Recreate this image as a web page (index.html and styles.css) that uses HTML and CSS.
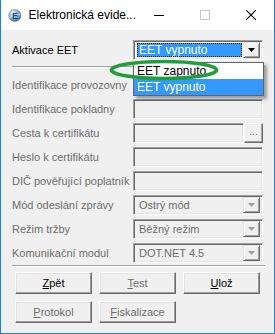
FILE: index.html
```html
<!DOCTYPE html>
<html lang="cs">
<head>
    <meta charset="UTF-8">
    <title>Elektronická evidence tržeb</title>
    <link rel="stylesheet" href="styles.css">
</head>
<body>
    <div class="window">
        <div class="titlebar">
            <svg class="app-icon" viewBox="0 0 16 16">
                <defs>
                    <radialGradient id="globe" cx="0.35" cy="0.3" r="0.8">
                        <stop offset="0" stop-color="#e8f2fb"/>
                        <stop offset="0.55" stop-color="#7fa9cf"/>
                        <stop offset="1" stop-color="#2f5f8f"/>
                    </radialGradient>
                </defs>
                <circle cx="8" cy="8" r="7.2" fill="url(#globe)" stroke="#55708c" stroke-width="0.6"/>
                <path d="M1.5 10.5 Q8 6 14.6 7.2" fill="none" stroke="#d9dde2" stroke-width="1.2"/>
                <text x="8.3" y="12" font-family="Liberation Sans, sans-serif" font-size="10" font-weight="bold" fill="#23496f" text-anchor="middle">E</text>
            </svg>
            <span class="title">Elektronická evide...</span>
            <div class="controls">
                <span class="ctl"><svg width="10" height="10" viewBox="0 0 10 10"><line x1="0" y1="5.5" x2="10" y2="5.5" stroke="#000" stroke-width="1"/></svg></span>
                <span class="ctl"><svg width="10" height="10" viewBox="0 0 10 10"><rect x="0.5" y="0.5" width="9" height="9" fill="none" stroke="#c8c8c8" stroke-width="1"/></svg></span>
                <span class="ctl"><svg width="10" height="10" viewBox="0 0 10 10"><path d="M0 0 L10 10 M10 0 L0 10" stroke="#000" stroke-width="1.1"/></svg></span>
            </div>
        </div>

        <div class="client">
            <div class="row">
                <label class="lbl on">Aktivace EET</label>
                <div class="combo focused">
                    <span class="value"><span class="sel">EET vypnuto</span></span>
                    <span class="arrow"><svg width="7" height="4" viewBox="0 0 7 4"><path d="M0 0 H7 L3.5 4 Z" fill="#000"/></svg></span>
                </div>
            </div>

            <div class="sep sep-top"></div>

            <div class="fields">
                <div class="row">
                    <label class="lbl">Identifikace provozovny</label>
                    <div class="edit"></div>
                </div>
                <div class="row">
                    <label class="lbl">Identifikace pokladny</label>
                    <div class="edit"></div>
                </div>
                <div class="row">
                    <label class="lbl">Cesta k certifikátu</label>
                    <div class="browse">
                        <div class="edit"></div>
                        <span class="dots">...</span>
                    </div>
                </div>
                <div class="row">
                    <label class="lbl">Heslo k certifikátu</label>
                    <div class="edit"></div>
                </div>
                <div class="row">
                    <label class="lbl">DIČ pověřující poplatník</label>
                    <div class="edit"></div>
                </div>
                <div class="row">
                    <label class="lbl">Mód odeslání zprávy</label>
                    <div class="combo">
                        <span class="value">Ostrý mód</span>
                        <span class="arrow"><svg width="7" height="4" viewBox="0 0 7 4"><path d="M0 0 H7 L3.5 4 Z" fill="#a0a0a0"/></svg></span>
                    </div>
                </div>
                <div class="row">
                    <label class="lbl">Režim tržby</label>
                    <div class="combo">
                        <span class="value">Běžný režim</span>
                        <span class="arrow"><svg width="7" height="4" viewBox="0 0 7 4"><path d="M0 0 H7 L3.5 4 Z" fill="#a0a0a0"/></svg></span>
                    </div>
                </div>
                <div class="row">
                    <label class="lbl">Komunikační modul</label>
                    <div class="combo">
                        <span class="value">DOT.NET 4.5</span>
                        <span class="arrow"><svg width="7" height="4" viewBox="0 0 7 4"><path d="M0 0 H7 L3.5 4 Z" fill="#a0a0a0"/></svg></span>
                    </div>
                </div>
            </div>

            <div class="sep sep-bottom"></div>

            <div class="buttons">
                <button class="btn"><u>Z</u>pět</button>
                <button class="btn off"><u>T</u>est</button>
                <button class="btn"><u>U</u>lož</button>
                <button class="btn off"><u>P</u>rotokol</button>
                <button class="btn off"><u>F</u>iskalizace</button>
            </div>

            <div class="droplist">
                <div class="item">EET zapnuto</div>
                <div class="item current">EET vypnuto</div>
            </div>

            <svg class="mark" viewBox="0 0 112 22">
                <ellipse cx="56" cy="11" rx="52.5" ry="8.5" fill="none" stroke="#1f9e3a" stroke-width="3.6"/>
            </svg>
        </div>
    </div>
</body>
</html>
```

FILE: styles.css
```css
body { margin: 0; font-family: "Liberation Sans", Arial, sans-serif; font-size: 11px; color: #000; }

.window {
    width: 275px;
    height: 334px;
    box-sizing: border-box;
    border: 1px solid #1883d7;
    border-top: none;
    background: #f0f0f0;
    display: flex;
    flex-direction: column;
}

/* title bar */
.titlebar { height: 30px; background: #fff; display: flex; align-items: center; }
.app-icon { width: 15px; height: 15px; margin-left: 7px; }
.title { margin-left: 7px; font-size: 12px; white-space: nowrap; }
.controls { margin-left: auto; display: flex; height: 100%; }
.ctl { width: 46px; display: flex; align-items: center; justify-content: center; }

/* client area */
.client { flex: 1; position: relative; padding: 10px 0 0 11px; }

.row {
    display: grid;
    grid-template-columns: 121px 130px;
    align-items: center;
    height: 20px;
}
.lbl { color: #6d6d6d; white-space: nowrap; }
.lbl.on { color: #000; }

.fields { display: flex; flex-direction: column; gap: 4px; }

.sep { width: 253px; border-top: 1px solid #a0a0a0; border-bottom: 1px solid #fff; }
.sep-top { margin: 6px 0 7px; }
.sep-bottom { margin: 2px 0 5px; }

/* sunken edit box */
.edit {
    height: 20px;
    box-sizing: border-box;
    border: 1px solid;
    border-color: #a0a0a0 #fff #fff #a0a0a0;
    box-shadow: inset 1px 1px 0 #696969, inset -1px -1px 0 #e3e3e3;
    background: #f0f0f0;
}
.browse { display: flex; }
.browse .edit { flex: 1; }
.dots {
    width: 19px;
    height: 20px;
    box-sizing: border-box;
    border: 1px solid;
    border-color: #fff #696969 #696969 #fff;
    box-shadow: inset -1px -1px 0 #a0a0a0;
    text-align: center;
    line-height: 16px;
    color: #6d6d6d;
    font-size: 10px;
}

/* combo boxes */
.combo {
    height: 20px;
    box-sizing: border-box;
    border: 1px solid;
    border-color: #a0a0a0 #fff #fff #a0a0a0;
    box-shadow: inset 1px 1px 0 #696969, inset -1px -1px 0 #e3e3e3;
    display: flex;
    align-items: stretch;
    padding: 1px 2px 1px 1px;
    color: #6d6d6d;
}
.combo .value { flex: 1; padding-left: 4px; line-height: 16px; white-space: nowrap; }
.combo .arrow {
    width: 17px;
    box-sizing: border-box;
    border: 1px solid;
    border-color: #e3e3e3 #696969 #696969 #e3e3e3;
    box-shadow: inset 1px 1px 0 #fff, inset -1px -1px 0 #a0a0a0;
    background: #f0f0f0;
    display: flex;
    align-items: center;
    justify-content: center;
}
.combo.focused { background: #fff; color: #fff; }
.combo.focused .value { padding: 1px 1px 1px 2px; }
.combo.focused .sel {
    display: block;
    height: 100%;
    box-sizing: border-box;
    background: #3399ff;
    outline: 1px dotted #1a1a1a;
    outline-offset: -1px;
    padding-left: 2px;
    line-height: 14px;
    font-size: 12px;
}

/* buttons */
.buttons {
    display: grid;
    grid-template-columns: repeat(3, 77px);
    gap: 7px;
    margin-left: 3px;
}
.btn {
    height: 22px;
    box-sizing: border-box;
    border: 1px solid;
    border-color: #fff #696969 #696969 #fff;
    box-shadow: inset -1px -1px 0 #a0a0a0, inset 1px 1px 0 #e3e3e3;
    background: #f0f0f0;
    font-family: inherit;
    font-size: 11px;
    color: #000;
    padding: 0;
}
.btn.off { color: #6d6d6d; }

/* opened dropdown list over the form */
.droplist {
    position: absolute;
    left: 132px;
    top: 32px;
    width: 129px;
    border: 1px solid #646464;
    background: #fff;
    box-shadow: 3px 3px 3px rgba(0, 0, 0, 0.35);
}
.item { height: 16px; line-height: 16px; padding-left: 3px; color: #000; font-size: 12px; }
.item.current { background: #3399ff; color: #fff; }

.mark { position: absolute; left: 107px; top: 29px; width: 112px; height: 22px; }
```
